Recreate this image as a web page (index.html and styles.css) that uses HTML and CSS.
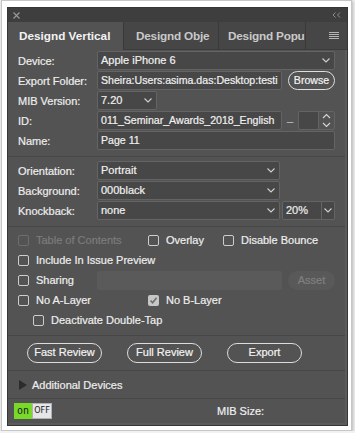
FILE: index.html
```html
<!DOCTYPE html>
<html lang="en">
<head>
  <meta charset="UTF-8" />
  <title>Designd Vertical</title>
  <link rel="stylesheet" href="styles.css">
</head>
<body>

  <div class="frame">
    <div class="panel">

      <div class="titlebar">
        <svg class="close" width="7" height="7" viewBox="0 0 7 7"><path d="M0.5 0.5L6.5 6.5M6.5 0.5L0.5 6.5" stroke="#9a9a9a" stroke-width="1.1" fill="none"/></svg>
        <svg class="collapse" width="9" height="6" viewBox="0 0 9 6"><path d="M3.5 0.5L1 3L3.5 5.5M8 0.5L5.5 3L8 5.5" stroke="#8c8c8c" stroke-width="1" fill="none"/></svg>
      </div>

      <div class="tabs">
        <div class="tab active">Designd Vertical</div>
        <div class="tab tab-obj">Designd Obje</div>
        <div class="tab tab-pop">Designd Popu</div>
        <div class="tab-menu">
          <svg width="10" height="8" viewBox="0 0 10 8"><path d="M0 0.5H10M0 2.5H10M0 4.5H10M0 6.5H10" stroke="#b4b4b4" stroke-width="1"/></svg>
        </div>
      </div>

      <div class="content">

        <div class="form form-top">
          <span class="label">Device:</span>
          <div class="select">Apple iPhone 6
            <svg class="chev" width="8" height="5" viewBox="0 0 8 5"><path d="M0.5 0.5L4 4L7.5 0.5" stroke="#cfcfcf" stroke-width="1.1" fill="none"/></svg>
          </div>

          <span class="label">Export Folder:</span>
          <div class="line">
            <div class="input">Sheira:Users:asima.das:Desktop:testi</div>
            <div class="pill browse">Browse</div>
          </div>

          <span class="label">MIB Version:</span>
          <div class="line">
            <div class="select select-mib">7.20
              <svg class="chev" width="8" height="5" viewBox="0 0 8 5"><path d="M0.5 0.5L4 4L7.5 0.5" stroke="#cfcfcf" stroke-width="1.1" fill="none"/></svg>
            </div>
          </div>

          <span class="label">ID:</span>
          <div class="line">
            <div class="input">011_Seminar_Awards_2018_English</div>
            <span class="dash">–</span>
            <div class="num-box"></div>
            <div class="stepper">
              <svg width="9" height="15" viewBox="0 0 9 15"><path d="M1 5L4.5 1.5L8 5M1 10L4.5 13.5L8 10" stroke="#d6d6d6" stroke-width="1.1" fill="none"/></svg>
            </div>
          </div>

          <span class="label">Name:</span>
          <div class="input">Page 11</div>
        </div>

        <div class="form form-mid">
          <span class="label">Orientation:</span>
          <div class="line">
            <div class="select select-wide">Portrait
              <svg class="chev" width="8" height="5" viewBox="0 0 8 5"><path d="M0.5 0.5L4 4L7.5 0.5" stroke="#cfcfcf" stroke-width="1.1" fill="none"/></svg>
            </div>
          </div>

          <span class="label">Background:</span>
          <div class="line">
            <div class="select select-wide">000black
              <svg class="chev" width="8" height="5" viewBox="0 0 8 5"><path d="M0.5 0.5L4 4L7.5 0.5" stroke="#cfcfcf" stroke-width="1.1" fill="none"/></svg>
            </div>
          </div>

          <span class="label">Knockback:</span>
          <div class="line">
            <div class="select select-wide">none
              <svg class="chev" width="8" height="5" viewBox="0 0 8 5"><path d="M0.5 0.5L4 4L7.5 0.5" stroke="#cfcfcf" stroke-width="1.1" fill="none"/></svg>
            </div>
            <div class="pct">
              <span class="pct-val">20%</span>
              <span class="pct-arrow">
                <svg width="8" height="5" viewBox="0 0 8 5"><path d="M0.5 0.5L4 4L7.5 0.5" stroke="#cfcfcf" stroke-width="1.1" fill="none"/></svg>
              </span>
            </div>
          </div>
        </div>

        <div class="checks">
          <div class="check-row">
            <label class="check w130 disabled"><span class="box"></span>Table of Contents</label>
            <label class="check w75"><span class="box"></span>Overlay</label>
            <label class="check"><span class="box"></span>Disable Bounce</label>
          </div>
          <div class="check-row">
            <label class="check"><span class="box"></span>Include In Issue Preview</label>
          </div>
          <div class="check-row">
            <label class="check w79"><span class="box"></span>Sharing</label>
            <div class="input-off"></div>
            <div class="pill asset">Asset</div>
          </div>
          <div class="check-row">
            <label class="check w130"><span class="box"></span>No A-Layer</label>
            <label class="check">
              <svg class="box-on" width="11" height="11" viewBox="0 0 11 11"><rect width="11" height="11" rx="2" fill="#c6c6c6"/><path d="M2.5 5.5L4.6 7.8L8.6 2.8" stroke="#6e6e6e" stroke-width="1.6" fill="none"/></svg>No B-Layer
            </label>
          </div>
          <div class="check-row indent">
            <label class="check"><span class="box"></span>Deactivate Double-Tap</label>
          </div>
        </div>

        <div class="actions">
          <div class="pill action">Fast Review</div>
          <div class="pill action">Full Review</div>
          <div class="pill action">Export</div>
        </div>

        <div class="devices">
          <svg width="8" height="10" viewBox="0 0 8 10"><path d="M0 0L8 5L0 10Z" fill="#2c2c2c"/></svg>
          <span>Additional Devices</span>
        </div>

        <div class="footer">
          <div class="toggle"><span class="on">on</span><span class="off">OFF</span></div>
          <span class="size">MIB Size:</span>
        </div>

      </div>
    </div>
  </div>

</body>
</html>
```

FILE: styles.css
```css
body {
  margin: 0;
  background: #f2f2f2;
  font-family: "Liberation Sans", Arial, sans-serif;
  font-size: 11px;
  color: #ededed;
  -webkit-text-stroke: 0.2px;
}

.frame {
  width: 341px;
  height: 420px;
  margin-left: 1px;
  padding: 6px 3px 3px 5px;
  background: #fff;
  border: 1px solid #c6c6c6;
  box-shadow: 1px 1px 3px rgba(0, 0, 0, 0.25);
}

.panel {
  width: 341px;
  height: 419px;
  box-sizing: border-box;
  border: 1px solid #363636;
  background: #535353;
  display: flex;
  flex-direction: column;
}

/* title bar */
.titlebar {
  height: 14px;
  background: #3e3e3e;
  display: flex;
  align-items: center;
  justify-content: space-between;
  padding: 0 6px 0 5px;
}

.close { margin-top: 1px; }

/* tabs */
.tabs {
  height: 28px;
  display: flex;
  background: #464646;
}

.tab {
  height: 28px;
  line-height: 28px;
  box-sizing: border-box;
  border-right: 1px solid #393939;
  border-bottom: 1px solid #3c3c3c;
  font-size: 11.75px;
  font-weight: bold;
  letter-spacing: -0.2px;
  color: #c9c9c9;
  white-space: nowrap;
  overflow: hidden;
  -webkit-text-stroke: 0;
}

.tab.active {
  width: 116px;
  padding-left: 11px;
  background: #535353;
  color: #f2f2f2;
  border-bottom: none;
  letter-spacing: 0;
}

.tab-obj { width: 95px; padding-left: 12px; }
.tab-pop { width: 87px; padding-left: 9px; }

.tab-menu {
  flex: 1;
  display: flex;
  align-items: center;
  justify-content: flex-end;
  padding-right: 8px;
  border-bottom: 1px solid #3c3c3c;
  box-sizing: border-box;
}

/* body */
.content {
  flex: 1;
  border-right: 2px solid #5b5b5b;
  border-bottom: 2px solid #5b5b5b;
  display: flex;
  flex-direction: column;
}

.form {
  display: grid;
  grid-template-columns: 79px 1fr;
  grid-auto-rows: 19px;
  row-gap: 1px;
  padding: 0 10px;
  align-items: center;
}

.form-top { padding-top: 1px; padding-bottom: 6px; }
.form-mid {
  border-top: 1px solid #474747;
  padding-top: 4px;
  padding-bottom: 6px;
}

.label { color: #eeeeee; }

.line {
  display: flex;
  align-items: center;
  height: 19px;
}

.select, .input {
  height: 19px;
  box-sizing: border-box;
  background: #474747;
  border: 1px solid #646464;
  border-radius: 2px;
  padding-left: 3px;
  line-height: 17px;
  color: #f0f0f0;
  white-space: nowrap;
  overflow: hidden;
}

.input { font-size: 10.6px; }

.select {
  display: flex;
  justify-content: space-between;
  align-items: center;
  padding-right: 4px;
}

.line .input { width: 185px; }
.select-mib { width: 60px; }
.select-wide { width: 183px; }

.pill {
  height: 19px;
  box-sizing: border-box;
  border-radius: 10px;
  text-align: center;
  line-height: 16px;
  color: #f2f2f2;
}

.browse {
  width: 47px;
  margin-left: 6px;
  border: 1.5px solid #dedede;
  font-size: 10.6px;
}

.dash {
  width: 16px;
  text-align: center;
  color: #b8b8b8;
}

.num-box {
  width: 20px;
  height: 19px;
  box-sizing: border-box;
  background: #474747;
  border: 1px solid #646464;
  border-right: none;
  border-radius: 2px 0 0 2px;
}

.stepper {
  width: 17px;
  height: 19px;
  box-sizing: border-box;
  border: 1px solid #646464;
  border-radius: 0 2px 2px 0;
  display: flex;
  align-items: center;
  justify-content: center;
}

.pct {
  width: 53px;
  height: 19px;
  margin-left: 2px;
  box-sizing: border-box;
  border: 1px solid #646464;
  border-radius: 2px;
  background: #474747;
  display: flex;
}

.pct-val {
  width: 35px;
  padding-left: 3px;
  line-height: 17px;
  border-right: 1px solid #646464;
}

.pct-arrow {
  flex: 1;
  display: flex;
  align-items: center;
  justify-content: center;
}

/* checkboxes */
.checks {
  border-top: 1px solid #474747;
  padding: 3px 10px 5px;
}

.check-row {
  height: 20px;
  display: flex;
  align-items: center;
}

.check-row.indent { padding-left: 15px; }

.check {
  display: flex;
  align-items: center;
  color: #eeeeee;
  white-space: nowrap;
}

.w130 { width: 130px; }
.w75 { width: 75px; }
.w79 { width: 79px; }

.box {
  width: 11px;
  height: 11px;
  box-sizing: border-box;
  border: 1px solid #cdcdcd;
  border-radius: 2px;
  margin-right: 7px;
}

.box-on { margin-right: 7px; }

.check.disabled { color: #7c7c7c; }
.check.disabled .box { border-color: #6e6e6e; }

.input-off {
  width: 185px;
  height: 19px;
  background: #5a5a5a;
  border-radius: 2px;
}

.asset {
  width: 47px;
  margin-left: 6px;
  background: #595959;
  color: #808080;
  line-height: 19px;
}

/* buttons */
.actions {
  border-top: 1px solid #474747;
  padding: 7px 0 7px 19px;
  display: flex;
  gap: 25px;
}

.action {
  width: 75px;
  height: 20px;
  border: 1.5px solid #dcdcdc;
  line-height: 17px;
}

.devices {
  border-top: 1px solid #474747;
  height: 27px;
  display: flex;
  align-items: center;
  padding-left: 11px;
  gap: 5px;
  color: #eeeeee;
}

.footer {
  border-top: 1px solid #474747;
  flex: 1;
  display: flex;
  align-items: center;
  padding-left: 6px;
}

.toggle {
  display: flex;
  height: 16px;
  font-family: "DejaVu Sans Mono", monospace;
  font-size: 10px;
  line-height: 16px;
  color: #1a1a1a;
  -webkit-text-stroke: 0;
}

.toggle .on {
  width: 18px;
  background: #78d92a;
  text-align: center;
}

.toggle .off {
  width: 20px;
  box-sizing: border-box;
  background: #e6e6e6;
  border: 1px solid #b0b0b0;
  line-height: 14px;
  font-family: "DejaVu Sans", sans-serif;
  font-size: 8px;
  text-align: center;
}

.size {
  margin-left: 165px;
  color: #f0f0f0;
}
```
